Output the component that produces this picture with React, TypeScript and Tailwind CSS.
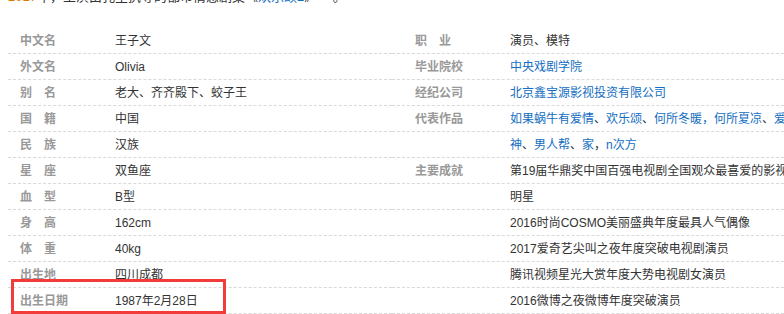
import React from "react";

type Part = { t: string; link?: boolean };
type Row = { label: string; value: Part[] };

const L = (t: string): Part => ({ t, link: true });
const P = (t: string): Part => ({ t });

const left: Row[] = [
  { label: "中文名", value: [P("王子文")] },
  { label: "外文名", value: [P("Olivia")] },
  { label: "别　名", value: [P("老大、齐齐殿下、蛟子王")] },
  { label: "国　籍", value: [P("中国")] },
  { label: "民　族", value: [P("汉族")] },
  { label: "星　座", value: [P("双鱼座")] },
  { label: "血　型", value: [P("B型")] },
  { label: "身　高", value: [P("162cm")] },
  { label: "体　重", value: [P("40kg")] },
  { label: "出生地", value: [P("四川成都")] },
  { label: "出生日期", value: [P("1987年2月28日")] },
];

const right: Row[] = [
  { label: "职　业", value: [P("演员、模特")] },
  { label: "毕业院校", value: [L("中央戏剧学院")] },
  { label: "经纪公司", value: [L("北京鑫宝源影视投资有限公司")] },
  {
    label: "代表作品",
    value: [
      L("如果蜗牛有爱情"),
      P("、"),
      L("欢乐颂"),
      P("、"),
      L("何所冬暖，何所夏凉"),
      P("、"),
      L("爱"),
    ],
  },
  { label: "", value: [L("神"), P("、"), L("男人帮"), P("、"), L("家"), P("，"), L("n次方")] },
  { label: "主要成就", value: [P("第19届华鼎奖中国百强电视剧全国观众最喜爱的影视明星")] },
  { label: "", value: [P("明星")] },
  { label: "", value: [P("2016时尚COSMO美丽盛典年度最具人气偶像")] },
  { label: "", value: [P("2017爱奇艺尖叫之夜年度突破电视剧演员")] },
  { label: "", value: [P("腾讯视频星光大赏年度大势电视剧女演员")] },
  { label: "", value: [P("2016微博之夜微博年度突破演员")] },
];

function Value({ parts }: { parts: Part[] }) {
  return (
    <>
      {parts.map((p, i) =>
        p.link ? (
          <span key={i} className="text-[#136ec2]">
            {p.t}
          </span>
        ) : (
          <span key={i} className="text-[#333333]">
            {p.t}
          </span>
        )
      )}
    </>
  );
}

export default function App() {
  const font = { fontFamily: '"Liberation Sans", Arial, "Noto Sans CJK SC", sans-serif' };
  return (
    <div
      className="relative w-[784px] h-[314px] overflow-hidden bg-white text-[12px]"
      style={font}
    >
      <div className="h-[6px] overflow-hidden pl-[8px]">
        <div className="-mt-[11px] leading-[16px] text-[13px] whitespace-nowrap text-[#333333]">
          <span className="text-[#e07b00]">2017</span>年，主演由孔笙执导的都市情感剧集
          <span>《</span>
          <span className="text-[#136ec2]">欢乐颂2</span>
          <span>》</span>
          <span className="ml-[22px]">。</span>
        </div>
      </div>
      <div className="flex mt-[22px]">
        <div className="ml-[8px] w-[384px] shrink-0">
          {left.map((r, i) => (
            <div
              key={i}
              className="flex h-[26px] items-center border-b border-dashed border-[#d9d9d9] whitespace-nowrap"
            >
              <div className="w-[107px] pl-[12px] font-bold text-[#999999]">{r.label}</div>
              <div>
                <Value parts={r.value} />
              </div>
            </div>
          ))}
        </div>
        <div className="flex-1 min-w-0">
          {right.map((r, i) => (
            <div
              key={i}
              className="flex h-[26px] items-center border-b border-dashed border-[#d9d9d9] whitespace-nowrap"
            >
              <div className="w-[118px] shrink-0 pl-[23px] font-bold text-[#999999]">{r.label}</div>
              <div className="overflow-hidden">
                <Value parts={r.value} />
              </div>
            </div>
          ))}
        </div>
      </div>
      <div className="absolute left-[11px] top-[279px] w-[215px] h-[35px] border-[3px] border-[#f23c3c]" />
    </div>
  );
}
